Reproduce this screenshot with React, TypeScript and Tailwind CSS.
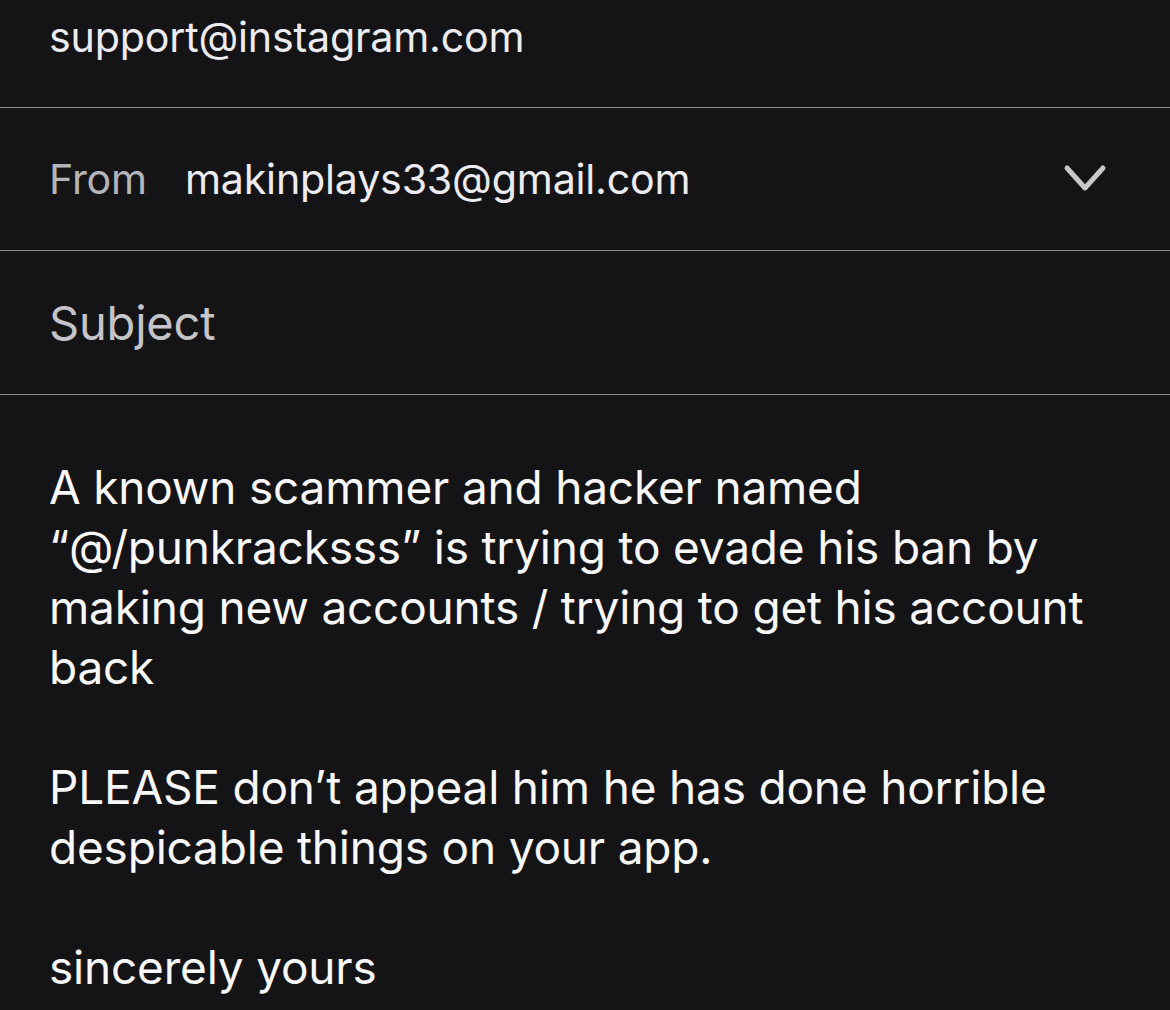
const Chevron = () => (
  <svg width="44" height="30" viewBox="0 0 44 30" fill="none" className="shrink-0">
    <path d="M4 4 L22 24 L40 4" stroke="#c7c7cc" strokeWidth="5" strokeLinecap="round" strokeLinejoin="round" />
  </svg>
);

const App = () => {
  return (
    <div
      className="w-[1170px] h-[1010px] overflow-hidden bg-[#141416] text-[#ececf0]"
      style={{ fontFamily: 'Inter, "Noto Sans", sans-serif' }}
    >
      {/* To */}
      <div className="h-[108px] border-b border-[#8a8a8e] pl-[49px] pt-[15px]">
        <div className="text-[41.2px] leading-[44px] tracking-[-0.2px]">support@instagram.com</div>
      </div>

      {/* From */}
      <div className="h-[143px] border-b border-[#8a8a8e] pl-[49px] pr-[63px] flex items-center">
        <span className="text-[41.2px] leading-[44px] text-[#b4b4b9] tracking-[-0.2px]">From</span>
        <span className="ml-[38px] text-[41.2px] leading-[44px] tracking-[-0.2px] flex-1">makinplays33@gmail.com</span>
        <Chevron />
      </div>

      {/* Subject */}
      <div className="h-[144px] border-b border-[#8a8a8e] pl-[49px] flex items-center">
        <span className="text-[47px] leading-[50px] text-[#c4c4c9] tracking-[-0.2px]">Subject</span>
      </div>

      {/* Body */}
      <div className="pl-[49px] pr-[30px] pt-[62px] text-[46px] leading-[60px] text-[#f7f7f7] tracking-[-0.2px]">
        <p>
          A known scammer and hacker named
          <br />
          “@/punkracksss” is trying to evade his ban by
          <br />
          making new accounts / trying to get his account
          <br />
          back
        </p>
        <p className="mt-[60px]">
          PLEASE don’t appeal him he has done horrible
          <br />
          despicable things on your app.
        </p>
        <p className="mt-[60px]">sincerely yours</p>
      </div>
    </div>
  );
};

export default App;
